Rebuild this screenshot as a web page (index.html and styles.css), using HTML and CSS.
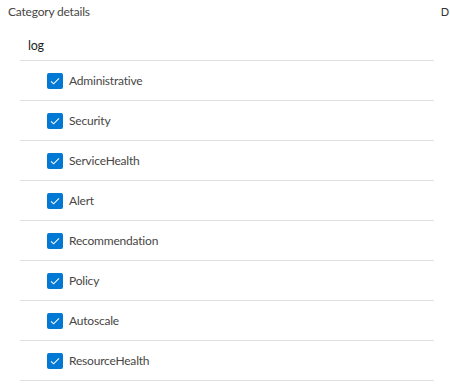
FILE: index.html
```html
<!DOCTYPE html>
<html lang="en">
<head>
    <meta charset="UTF-8">
    <title>Category details</title>
    <link rel="stylesheet" href="styles.css">
</head>
<body>
    <div class="page">
        <div class="top">
            <h2 class="title">Category details</h2>
            <span class="next">D</span>
        </div>

        <div class="group">
            <div class="group-head">log</div>
            <label class="row"><span class="box"><svg viewBox="0 0 16 16"><path d="M4 8.3l2.6 2.5L12 5.4"/></svg></span>Administrative</label>
            <label class="row"><span class="box"><svg viewBox="0 0 16 16"><path d="M4 8.3l2.6 2.5L12 5.4"/></svg></span>Security</label>
            <label class="row"><span class="box"><svg viewBox="0 0 16 16"><path d="M4 8.3l2.6 2.5L12 5.4"/></svg></span>ServiceHealth</label>
            <label class="row"><span class="box"><svg viewBox="0 0 16 16"><path d="M4 8.3l2.6 2.5L12 5.4"/></svg></span>Alert</label>
            <label class="row"><span class="box"><svg viewBox="0 0 16 16"><path d="M4 8.3l2.6 2.5L12 5.4"/></svg></span>Recommendation</label>
            <label class="row"><span class="box"><svg viewBox="0 0 16 16"><path d="M4 8.3l2.6 2.5L12 5.4"/></svg></span>Policy</label>
            <label class="row"><span class="box"><svg viewBox="0 0 16 16"><path d="M4 8.3l2.6 2.5L12 5.4"/></svg></span>Autoscale</label>
            <label class="row"><span class="box"><svg viewBox="0 0 16 16"><path d="M4 8.3l2.6 2.5L12 5.4"/></svg></span>ResourceHealth</label>
        </div>
    </div>
</body>
</html>
```

FILE: styles.css
```css
body {
    margin: 0;
    font-family: "Segoe UI", Lato, "Liberation Sans", sans-serif;
    font-size: 12px;
    letter-spacing: -0.2px;
    color: #323130;
    background-color: white;
}
.page {
    width: 450px;
    height: 392px;
    overflow: hidden;
}
.top {
    display: flex;
    justify-content: space-between;
    padding: 3px 0 0 8px;
    height: 27px;
}
.title {
    margin: 0;
    font-size: 12px;
    font-weight: normal;
    color: #484644;
    line-height: 18px;
}
.next {
    margin-right: 1px;
    line-height: 18px;
    font-size: 11px;
    color: #323130;
}
.group {
    margin-left: 20px;
    width: 414px;
}
.group-head {
    height: 30px;
    line-height: 32px;
    padding-left: 8px;
    border-bottom: 1px solid #e1dfdd;
    font-size: 12.5px;
    color: #201f1e;
}
.row {
    display: flex;
    align-items: center;
    height: 39px;
    padding-left: 27px;
    border-bottom: 1px solid #e1dfdd;
    color: #484644;
    cursor: pointer;
}
.box {
    width: 16px;
    height: 16px;
    border-radius: 2px;
    background-color: #0078d4;
    margin-right: 6px;
    display: flex;
}
.box svg {
    width: 16px;
    height: 16px;
    fill: none;
    stroke: white;
    stroke-width: 1.1;
}
```
